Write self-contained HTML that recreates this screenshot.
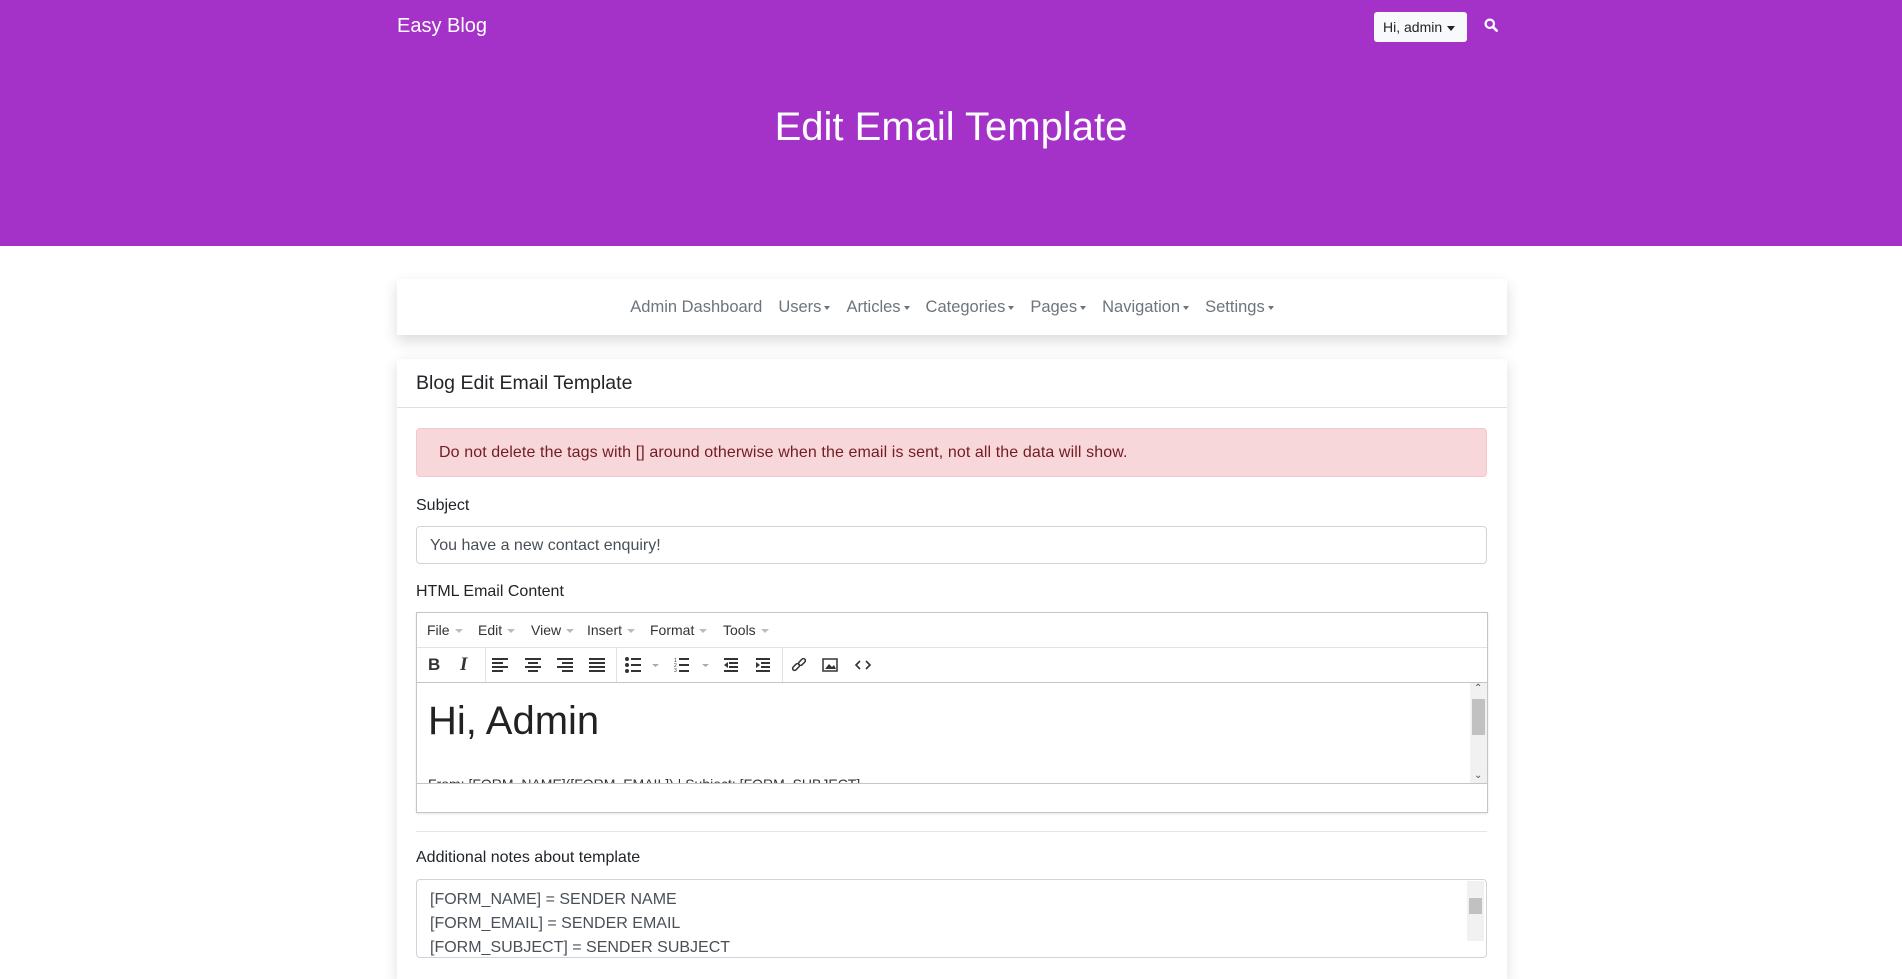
<!DOCTYPE html>
<html><head><meta charset="utf-8"><style>
*{box-sizing:border-box;margin:0;padding:0}
body{width:1902px;height:962px;overflow:hidden;background:#fff;font-family:"Liberation Sans",sans-serif;color:#212529;position:relative}
.abs{position:absolute}
.hdr{left:0;top:0;width:1902px;height:246px;background:#a431c8}
.brand{left:397px;top:15px;color:#fff;font-size:20px}
.btn{left:1374px;top:12px;width:93px;height:30px;background:#f8f9fa;border-radius:3px;font-size:14px;line-height:30px;padding-left:9px;color:#212529}
.caret{display:inline-block;width:0;height:0;border-left:4px solid transparent;border-right:4px solid transparent;border-top:5px solid currentColor;vertical-align:middle;margin-left:5px}
.title{left:0;width:1902px;top:104px;text-align:center;color:#fff;font-size:40px;line-height:46px}
.nav{left:397px;top:279px;width:1110px;height:56px;background:#fff;box-shadow:0 6px 14px rgba(0,0,0,.15);text-align:center;font-size:16.5px;color:#6c757d;line-height:56px;word-spacing:0}
.nav span{margin:0 8px}
.nav .caret{border-top-width:4px;border-left-width:3.5px;border-right-width:3.5px;margin-left:3px}
.card{left:397px;top:359px;width:1110px;height:620px;background:#fff;box-shadow:0 4px 14px rgba(0,0,0,.13)}
.ch{left:0;top:0;width:1110px;height:49px;border-bottom:1px solid #dfdfdf;font-size:19.5px;padding:13px 0 0 19px}
.alert{left:416px;top:428px;width:1071px;height:49px;background:#f8d7da;border:1px solid #f5c6cb;border-radius:4px;color:#721c24;font-size:16px;padding:15px 0 0 22px;letter-spacing:.1px}
.lbl{font-size:16px;left:416px}
.inp{left:416px;width:1071px;border:1px solid #ced4da;border-radius:4px;font-size:16px;color:#495057;padding-left:13px}
.ed{left:416px;top:612px;width:1072px;height:201px;border:1px solid #c5c5c5;box-shadow:0 1px 2px rgba(0,0,0,.1)}
.mb{left:0;top:0;width:1070px;height:35px;border-bottom:1px solid #e2e2e2;font-size:14px;color:#333}
.mb span{position:absolute;top:9px}
.mb i{display:inline-block;border-left:4px solid transparent;border-right:4px solid transparent;border-top:4px solid #bbb;vertical-align:middle;margin-left:5px}
.tb{left:0;top:35px;width:1070px;height:35px;border-bottom:1px solid #c5c5c5}
.sep{position:absolute;top:0;width:1px;height:34px;background:#e2e2e2}
.ic{position:absolute;top:9px}
.cnt{left:0;top:70px;width:1070px;height:100px;overflow:hidden}
.sb{position:absolute;right:0;top:0;width:17px;height:100px;background:#f1f1f1}
.sbt{position:absolute;left:2px;top:16px;width:13px;height:36px;background:#c1c1c1}
.st{left:0;top:170px;width:1070px;height:29px;border-top:1px solid #c5c5c5}
</style></head><body>
<div class="abs hdr"></div>
<div class="abs brand">Easy Blog</div>
<div class="abs btn">Hi, admin<span class="caret"></span></div>
<svg class="abs" style="left:1484px;top:18px" width="14" height="14" viewBox="0 0 14 14"><circle cx="5.8" cy="5.8" r="4.2" fill="none" stroke="#fff" stroke-width="2.2"/><path d="M8.8 8.8l3.8 3.8" stroke="#fff" stroke-width="2.6" stroke-linecap="round"/></svg>
<div class="abs title">Edit Email Template</div>
<div class="abs nav"><span>Admin Dashboard</span><span>Users<i class="caret"></i></span><span>Articles<i class="caret"></i></span><span>Categories<i class="caret"></i></span><span>Pages<i class="caret"></i></span><span>Navigation<i class="caret"></i></span><span>Settings<i class="caret"></i></span></div>
<div class="abs card"><div class="abs ch">Blog Edit Email Template</div></div>
<div class="abs alert">Do not delete the tags with [] around otherwise when the email is sent, not all the data will show.</div>
<div class="abs lbl" style="top:497px">Subject</div>
<div class="abs inp" style="top:526px;height:38px;line-height:37px;color:#495057">You have a new contact enquiry!</div>
<div class="abs lbl" style="top:583px">HTML Email Content</div>
<div class="abs ed">
 <div class="abs mb"><span style="left:10px">File<i></i></span><span style="left:61px">Edit<i></i></span><span style="left:114px">View<i></i></span><span style="left:170px">Insert<i></i></span><span style="left:233px">Format<i></i></span><span style="left:306px">Tools<i></i></span></div>
 <div class="abs tb">
  <span class="ic" style="left:11px;top:7px;font-weight:bold;font-size:17px;color:#333">B</span>
  <span class="ic" style="left:43px;top:6px;font-style:italic;font-family:'Liberation Serif';font-weight:bold;font-size:19px;color:#333">I</span>
  <div class="sep" style="left:68px"></div>
  <svg class="ic" style="left:75px" width="200" height="16" viewBox="0 0 200 16" fill="#333">
   <rect x="0" y="1" width="16" height="2"/><rect x="0" y="5" width="11" height="2"/><rect x="0" y="9" width="16" height="2"/><rect x="0" y="13" width="11" height="2"/>
   <rect x="33" y="1" width="16" height="2"/><rect x="36" y="5" width="10" height="2"/><rect x="33" y="9" width="16" height="2"/><rect x="36" y="13" width="10" height="2"/>
   <rect x="65" y="1" width="16" height="2"/><rect x="70" y="5" width="11" height="2"/><rect x="65" y="9" width="16" height="2"/><rect x="70" y="13" width="11" height="2"/>
   <rect x="97" y="1" width="16" height="2"/><rect x="97" y="5" width="16" height="2"/><rect x="97" y="9" width="16" height="2"/><rect x="97" y="13" width="16" height="2"/>
  </svg>
  <div class="sep" style="left:199px"></div>
  <svg class="ic" style="left:208px" width="160" height="16" viewBox="0 0 160 16" fill="#333">
   <circle cx="2" cy="2" r="2"/><circle cx="2" cy="8" r="2"/><circle cx="2" cy="14" r="2"/><rect x="6" y="1" width="10" height="2"/><rect x="6" y="7" width="10" height="2"/><rect x="6" y="13" width="10" height="2"/>
   <path d="M27 7h7l-3.5 3z" fill="#aaa"/>
   <text x="49" y="5" font-size="5">1</text><text x="49" y="10" font-size="5">2</text><text x="49" y="15" font-size="5">3</text><rect x="54" y="1" width="10" height="2"/><rect x="54" y="7" width="10" height="2"/><rect x="54" y="13" width="10" height="2"/>
   <path d="M77 7h7l-3.5 3z" fill="#aaa"/>
   <rect x="99" y="1" width="14" height="2"/><rect x="104" y="5" width="9" height="2"/><rect x="104" y="9" width="9" height="2"/><rect x="99" y="13" width="14" height="2"/><path d="M103 5v6l-4-3z"/>
   <rect x="131" y="1" width="14" height="2"/><rect x="136" y="5" width="9" height="2"/><rect x="136" y="9" width="9" height="2"/><rect x="131" y="13" width="14" height="2"/><path d="M131 5v6l4-3z"/>
  </svg>
  <div class="sep" style="left:365px"></div>
  <svg class="ic" style="left:374px" width="90" height="16" viewBox="0 0 90 16">
   <g fill="none" stroke="#333" stroke-width="1.5"><rect x="1" y="8" width="8" height="4" rx="2" transform="rotate(-45 5 10)"/><rect x="7" y="3" width="8" height="4" rx="2" transform="rotate(-45 11 5)"/></g>
   <rect x="32" y="2" width="14" height="12" fill="none" stroke="#333" stroke-width="1.5"/><path d="M34 12l4-5 3 3 2-2 2 4z" fill="#333"/>
   <path d="M69 4l-4 4 4 4M75 4l4 4-4 4" fill="none" stroke="#333" stroke-width="1.6"/>
  </svg>
 </div>
 <div class="abs cnt">
  <div class="abs" style="left:11px;top:16px;font-size:40px;color:#222">Hi, Admin</div>
  <div class="abs" style="left:11px;top:93px;font-size:14px;color:#333">From: [FORM_NAME]([FORM_EMAIL]) | Subject: [FORM_SUBJECT]</div>
  <div class="sb"><div class="sbt"></div><span style="position:absolute;left:4px;top:0;font-size:10px;color:#555">&#8963;</span><span style="position:absolute;left:4px;bottom:2px;font-size:10px;color:#555">&#8964;</span></div>
 </div>
 <div class="abs st"></div>
</div>
<div class="abs" style="left:416px;top:831px;width:1071px;height:1px;background:#e5e5e5"></div>
<div class="abs lbl" style="top:849px">Additional notes about template</div>
<div class="abs inp" style="top:879px;height:79px;padding-top:8px;line-height:24px;overflow:hidden">[FORM_NAME] = SENDER NAME<br>[FORM_EMAIL] = SENDER EMAIL<br>[FORM_SUBJECT] = SENDER SUBJECT
 <div style="position:absolute;right:2px;top:1px;width:17px;height:60px;background:#f1f1f1"><div style="position:absolute;left:2px;top:17px;width:13px;height:16px;background:#c1c1c1"></div></div>
</div>
</body></html>
